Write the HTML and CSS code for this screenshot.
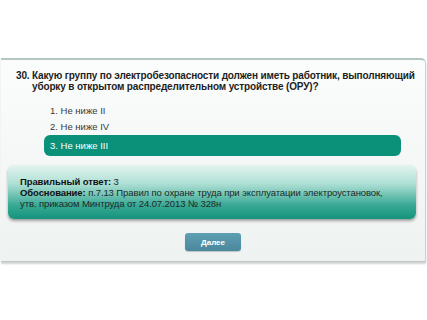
FILE: index.html
```html
<!DOCTYPE html>
<html lang="ru">
<head>
<meta charset="utf-8">
<link rel="stylesheet" href="styles.css">
</head>
<body>
<div class="panel">
  <div class="question"><span class="num">30.</span><span class="qtext">Какую группу по электробезопасности должен иметь работник, выполняющий уборку в открытом распределительном устройстве (ОРУ)?</span></div>
  <ul class="options">
    <li class="opt">1. Не ниже II</li>
    <li class="opt">2. Не ниже IV</li>
    <li class="opt selected">3. Не ниже III</li>
  </ul>
  <div class="answer">
    <div><b>Правильный ответ:</b> 3</div>
    <div><b>Обоснование:</b> п.7.13 Правил по охране труда при эксплуатации электроустановок, утв. приказом Минтруда от 24.07.2013 № 328н</div>
  </div>
  <div class="actions"><button class="next">Далее</button></div>
</div>
</body>
</html>
```
FILE: styles.css
```css
html, body { margin: 0; padding: 0; background: #ffffff; }
body { font-family: "Liberation Sans", Arial, sans-serif; width: 427px; height: 320px; overflow: hidden; }
.panel {
  margin: 58px 1px 0 1px;
  height: 204px;
  border-top: 2px solid #b3c7c0;
  border-right: 1px solid #c9d3d0;
  border-bottom: 1px solid #c0c8c6;
  border-top-right-radius: 5px;
  background: linear-gradient(#fbfdfc, #eef2f1);
  box-shadow: 0 2px 2px rgba(0,0,0,0.18);
  box-sizing: border-box;
  padding-top: 10px;
}
.question { display: flex; padding-left: 15px; font-weight: bold; font-size: 10px; letter-spacing: -0.15px; line-height: 11px; color: #1e1e1e; }
.num { width: 16px; flex: none; }
.qtext { width: 392px; }
.options { list-style: none; margin: 11px 0 0 0; padding: 0; }
.opt { margin: 0 0 0 43px; width: 357px; height: 16px; line-height: 16px; padding-left: 6px; font-size: 9.5px; color: #3a3a3a; box-sizing: border-box; }
.selected { height: 21px; line-height: 21px; background: #0b917a; color: #fff; border-radius: 6px; }
.answer {
  margin: 9px 9px 0 7px;
  height: 54px;
  border-radius: 6px;
  background: linear-gradient(#e3f5f0 0%, #aedfd4 35%, #37a893 75%, #15937d 100%);
  box-shadow: 0 2px 3px rgba(0,0,0,0.35);
  padding: 11px 26px 0 12px;
  box-sizing: border-box;
  font-size: 9.5px;
  letter-spacing: -0.1px;
  line-height: 11px;
  color: #1c2a28;
}
.answer b { color: #111; }
.actions { display: flex; justify-content: center; margin-top: 14px; }
.next {
  width: 56px; height: 18px; padding: 0; border: 0; border-radius: 3px;
  background: linear-gradient(#5f9fb3, #4a889c);
  color: #fff; font-family: "Liberation Sans", Arial, sans-serif; font-weight: bold; font-size: 8px;
  box-shadow: 0 1px 1px rgba(0,0,0,0.2);
}
```
